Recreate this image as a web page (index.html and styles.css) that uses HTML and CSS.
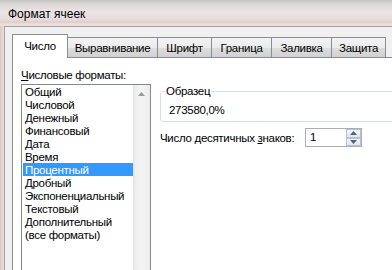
FILE: index.html
```html
<!DOCTYPE html>
<html lang="ru">
<head>
    <meta charset="UTF-8">
    <title>Формат ячеек</title>
    <link rel="stylesheet" href="styles.css">
</head>
<body>
    <div class="window">
        <div class="titlebar">Формат ячеек</div>
        <div class="client">
            <div class="tabs">
                <div class="tab active">Число</div>
                <div class="tab">Выравнивание</div>
                <div class="tab">Шрифт</div>
                <div class="tab">Граница</div>
                <div class="tab">Заливка</div>
                <div class="tab">Защита</div>
            </div>
            <div class="panel">
                <div class="left-col">
                    <div class="label"><u>Ч</u>исловые форматы:</div>
                    <div class="listbox">
                        <ul class="items">
                            <li>Общий</li>
                            <li>Числовой</li>
                            <li>Денежный</li>
                            <li>Финансовый</li>
                            <li>Дата</li>
                            <li>Время</li>
                            <li class="selected">Процентный</li>
                            <li>Дробный</li>
                            <li>Экспоненциальный</li>
                            <li>Текстовый</li>
                            <li>Дополнительный</li>
                            <li>(все форматы)</li>
                        </ul>
                        <div class="scrollbar">
                            <svg class="arrow" width="7" height="4" viewBox="0 0 7 4"><path d="M0 4 L3.5 0 L7 4 Z" fill="#9a9a9a"/></svg>
                        </div>
                    </div>
                </div>
                <div class="right-col">
                    <div class="sample">
                        <span class="legend">Образец</span>
                        <div class="sample-value">273580,0%</div>
                    </div>
                    <div class="decimals">
                        <span class="decimals-label">Число десятичных <u>з</u>наков:</span>
                        <div class="spin">
                            <div class="spin-text">1</div>
                            <div class="spin-buttons">
                                <div class="spin-btn"><svg width="7" height="4" viewBox="0 0 7 4"><path d="M0 4 L3.5 0 L7 4 Z" fill="#4d6185"/></svg></div>
                                <div class="spin-btn"><svg width="7" height="4" viewBox="0 0 7 4"><path d="M0 0 L3.5 4 L7 0 Z" fill="#4d6185"/></svg></div>
                            </div>
                        </div>
                    </div>
                </div>
            </div>
        </div>
    </div>
</body>
</html>
```

FILE: styles.css
```css
body {
    margin: 0;
    width: 392px;
    height: 270px;
    overflow: hidden;
    font-family: "Liberation Sans", Arial, sans-serif;
    font-size: 11.5px;
    letter-spacing: -0.3px;
    color: #000;
}

.window {
    width: 392px;
    height: 270px;
    overflow: hidden;
    display: flex;
    flex-direction: column;
    background: linear-gradient(90deg, #dcc4c4 0, #e9dede 4px, #ece4e4 100%);
}

.titlebar {
    height: 26px;
    line-height: 28px;
    padding-left: 8px;
    font-size: 12px;
    letter-spacing: 0;
    background: linear-gradient(#c4c2c2 0, #dcd6d6 4px, #ebe5e5 12px, #e6dada 20px, #e3c9c9 22px, #e8dede 24px);
}

.client {
    flex: 1;
    min-height: 0;
    margin-left: 4px;
    border-left: 1px solid #a7a2a2;
    border-top: 1px solid #a7a2a2;
    background: #f0f0f0;
    padding: 8px 0 0 7px;
    display: flex;
    flex-direction: column;
    overflow: hidden;
}

.tabs {
    display: flex;
    align-items: flex-end;
    height: 22px;
    flex-shrink: 0;
    position: relative;
    z-index: 1;
}

.tab {
    height: 20px;
    line-height: 20px;
    margin-left: -1px;
    border: 1px solid #898c95;
    border-bottom: none;
    background: linear-gradient(#f3f3f3 0, #ebebeb 50%, #dddddd 51%, #d1d1d1 100%);
    box-sizing: border-box;
    text-align: center;
    white-space: nowrap;
    flex-shrink: 0;
}

.tab.active {
    height: 24px;
    margin-bottom: -1px;
    margin-left: 0;
    width: 56px;
    line-height: 23px;
    background: #fff;
    z-index: 2;
}

.tab:nth-child(2) { width: 91px; }
.tab:nth-child(3) { width: 55px; }
.tab:nth-child(4) { width: 61px; }
.tab:nth-child(5) { width: 61px; }
.tab:nth-child(6) { width: 55px; }

.panel {
    flex: 1;
    min-height: 0;
    background: #fff;
    border-left: 1px solid #898c95;
    border-top: 1px solid #898c95;
    display: flex;
    gap: 9px;
    padding-left: 8px;
    overflow: hidden;
}

.label {
    height: 26px;
    line-height: 34px;
    white-space: nowrap;
}

.listbox {
    width: 128px;
    height: 200px;
    border: 1px solid #828790;
    display: flex;
}

.items {
    list-style: none;
    margin: 0;
    padding: 0 0 0 1px;
    flex: 1;
}

.items li {
    height: 13px;
    line-height: 14px;
    padding-left: 2px;
    white-space: nowrap;
}

.items li.selected {
    background: #3399ff;
    color: #fff;
}

.scrollbar {
    width: 17px;
    background: linear-gradient(90deg, #e2e2e2 0, #eeeeee 2px, #f4f4f4 50%, #ececec 100%);
    display: flex;
    justify-content: center;
    padding-top: 7px;
    box-sizing: border-box;
}

.arrow {
    display: block;
}

.right-col {
    display: flex;
    flex-direction: column;
    padding-top: 33px;
    flex-shrink: 0;
}

.sample {
    position: relative;
    width: 260px;
    height: 29px;
    border: 1px solid #d5dfe5;
    border-radius: 3px;
}

.legend {
    position: absolute;
    left: 4px;
    top: -8px;
    padding: 0 1px;
    background: #fff;
    line-height: 14px;
}

.sample-value {
    padding: 11px 0 0 8px;
    line-height: 14px;
}

.decimals {
    display: flex;
    align-items: center;
    margin-top: 6px;
    height: 19px;
}

.decimals-label {
    width: 145px;
    white-space: nowrap;
}

.spin {
    display: flex;
    width: 57px;
    height: 19px;
    border: 1px solid #abadb3;
    box-sizing: border-box;
}

.spin-text {
    flex: 1;
    padding-left: 4px;
    line-height: 17px;
}

.spin-buttons {
    width: 15px;
    display: flex;
    flex-direction: column;
}

.spin-btn {
    flex: 1;
    display: flex;
    align-items: center;
    justify-content: center;
    border: 1px solid #b8c2cf;
    background: linear-gradient(#f3f6fa, #dfe6ee);
}
```
